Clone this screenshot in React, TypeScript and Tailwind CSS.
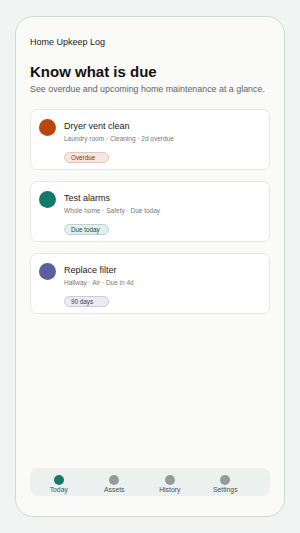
const TASKS = [
  {
    title: "Dryer vent clean",
    meta: "Laundry room · Cleaning · 2d overdue",
    badge: "Overdue",
    dot: "bg-[#b8470f]",
    badgeCls: "bg-[#f7e6df] border-[#e6c5b9] text-[#6b3a2c]",
  },
  {
    title: "Test alarms",
    meta: "Whole home · Safety · Due today",
    badge: "Due today",
    dot: "bg-[#13796b]",
    badgeCls: "bg-[#e2efed] border-[#bcd5d1] text-[#2c4a45]",
  },
  {
    title: "Replace filter",
    meta: "Hallway · Air · Due in 4d",
    badge: "90 days",
    dot: "bg-[#5b5e9e]",
    badgeCls: "bg-[#ebebf1] border-[#cacbd8] text-[#3a3b4a]",
  },
];

const NAV = [
  { label: "Today", active: true },
  { label: "Assets" },
  { label: "History" },
  { label: "Settings" },
];

export default function App() {
  return (
    <div className="min-h-[533px] bg-[#f1f4f3] px-[15px] pt-[16px] pb-[16px] font-['Liberation_Sans',Arial,sans-serif]">
      <div className="flex h-[501px] flex-col rounded-[18px] border border-[#cfd9d6] bg-[#fafaf9] px-[14px] pt-[19px] pb-[20px]">
        {/* Header */}
        <div className="text-[9px] leading-[12px] text-[#1c1c1c]">Home Upkeep Log</div>
        <h1 className="mt-[15px] text-[15px] font-bold leading-[18px] text-[#111]">Know what is due</h1>
        <p className="mt-[2px] whitespace-nowrap text-[8.9px] leading-[12px] text-[#5f6664]">
          See overdue and upcoming home maintenance at a glance.
        </p>

        {/* Task cards */}
        <div className="mt-[14px] flex flex-col gap-[11px]">
          {TASKS.map((t) => (
            <div
              key={t.title}
              className="flex h-[61px] items-start gap-[8px] rounded-[7px] border border-[#e6e9e8] bg-white pl-[8px] pt-[9px]"
            >
              <span className={`h-[17px] w-[17px] shrink-0 rounded-full ${t.dot}`} />
              <div className="flex flex-col">
                <div className="mt-[1.5px] text-[9px] leading-[11px] text-[#1a1a1a]">{t.title}</div>
                <div className="mt-[2px] text-[6.5px] leading-[9px] text-[#747a79]">{t.meta}</div>
                <span
                  className={`mt-[9px] flex h-[11px] w-[45px] items-center rounded-full border pl-[6px] text-[6.3px] leading-[9px] ${t.badgeCls}`}
                >
                  {t.badge}
                </span>
              </div>
            </div>
          ))}
        </div>

        <div className="flex-1" />

        {/* Bottom nav */}
        <div className="flex h-[28px] items-start rounded-[8px] bg-[#ecf1f0] pl-[1px] pt-[7px]">
          <div className="grid w-[222px] grid-cols-4">
            {NAV.map((n) => (
              <div key={n.label} className="flex flex-col items-center">
                <span
                  className={`h-[10px] w-[10px] rounded-full ${n.active ? "bg-[#137a6b]" : "bg-[#959b9b]"}`}
                />
                <span className="text-[6.8px] leading-[9px] text-[#4a4f4e]">{n.label}</span>
              </div>
            ))}
          </div>
        </div>
      </div>
    </div>
  );
}
